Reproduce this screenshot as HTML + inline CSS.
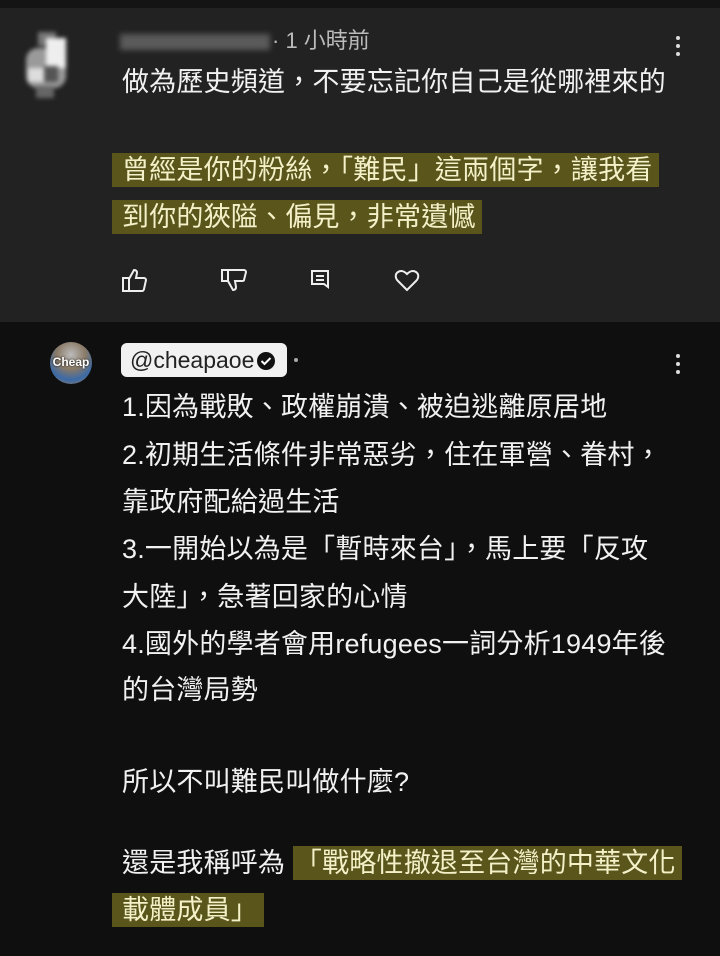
<!DOCTYPE html>
<html><head><meta charset="utf-8"><style>
*{margin:0;padding:0;box-sizing:border-box}
body{width:720px;height:956px;background:#0f0f0f;position:relative;overflow:hidden;font-family:"Liberation Sans","Noto Sans CJK TC",sans-serif;color:#f1f1f1}
.top{position:absolute;left:0;top:0;width:720px;height:322px;background:#222222}
.topbar{position:absolute;left:0;top:0;width:720px;height:8px;background:#141414}
.l{position:absolute;left:122px;height:36px;line-height:36px;font-size:27px;white-space:nowrap;letter-spacing:0.2px}
.hl{background:#59551b;color:#f4f0c8;padding:0 6px 0 10px;margin-left:-10px;display:inline-block;height:34px;line-height:34px}
.dots{position:absolute;width:4px;height:4px;background:#ddd;border-radius:2px}
</style></head><body>
<div class="top"></div><div class="topbar"></div>
<div style="position:absolute;left:22px;top:28px;width:52px;height:72px;filter:blur(2px)">
<div style="position:absolute;left:4px;top:20px;width:40px;height:40px;background:#9a9a9a;border-radius:12px"></div>
<div style="position:absolute;left:16px;top:4px;width:18px;height:14px;background:#777"></div>
<div style="position:absolute;left:24px;top:10px;width:20px;height:30px;background:#eee"></div>
<div style="position:absolute;left:6px;top:40px;width:18px;height:14px;background:#ddd"></div>
<div style="position:absolute;left:22px;top:38px;width:14px;height:16px;background:#555"></div>
<div style="position:absolute;left:14px;top:58px;width:18px;height:12px;background:#666"></div>
</div>
<div style="position:absolute;left:120px;top:34px;width:150px;height:16px;background:#5a5a5a;filter:blur(3px)"></div>
<div style="position:absolute;left:272px;top:27px;font-size:22px;color:#bbb;line-height:28px">· 1 小時前</div>
<div class="dots" style="left:676px;top:36px"></div><div class="dots" style="left:676px;top:44px"></div><div class="dots" style="left:676px;top:52px"></div>
<div class="l" style="top:64px">做為歷史頻道，不要忘記你自己是從哪裡來的</div>
<div class="l" style="top:152px"><span class="hl">曾經是你的粉絲，「難民」這兩個字，讓我看</span></div>
<div class="l" style="top:199px"><span class="hl">到你的狹隘、偏見，非常遺憾</span></div>
<svg style="position:absolute;left:120px;top:266px" width="310" height="28" fill="none" stroke="#eee" stroke-width="2">
<path d="M3 12h6v13H3z M9 13l5-9c2 0 3 1 3 3l-1 5h8c1 0 2 1 2 2l-2 9c0 1-1 2-2 2H9"/>
<path d="M104 4h22c1 0 2 1 2 2l-2 8c0 1-1 1-2 1h-7l1 6c0 2-1 3-3 3l-5-9 M104 4h6v11h-6z" transform="translate(-2,0)"/>
<path d="M192 5h16v16l-4-3h-12z M196 10h8 M196 14h8"/>
<path d="M287 24l-9-9c-3-3-3-7 0-9s6-1 9 2c3-3 6-4 9-2s3 6 0 9z"/>
</svg>
<div style="position:absolute;left:50px;top:342px;width:42px;height:42px;border-radius:21px;background:radial-gradient(circle at 50% 30%,#bbb 0,#8a7a66 40%,#3a6aa8 70%,#b08050 100%)"></div>
<div style="position:absolute;left:50px;top:355px;width:42px;text-align:center;font-size:12px;font-weight:bold;color:#fff;text-shadow:0 0 2px #000">Cheap</div>
<div style="position:absolute;left:121px;top:343px;width:166px;height:34px;background:#f1f1f1;border-radius:6px"></div>
<div style="position:absolute;left:130px;top:345px;font-size:23px;line-height:30px;color:#222">@cheapaoe</div>
<svg style="position:absolute;left:256px;top:351px" width="20" height="20"><circle cx="10" cy="10" r="9" fill="#111"/><path d="M5.5 10l3 3 6-6" stroke="#fff" stroke-width="2" fill="none"/></svg>
<div style="position:absolute;left:294px;top:358px;width:4px;height:4px;border-radius:2px;background:#aaa"></div>
<div class="dots" style="left:676px;top:354px"></div><div class="dots" style="left:676px;top:362px"></div><div class="dots" style="left:676px;top:370px"></div>
<div class="l" style="top:389px">1.因為戰敗、政權崩潰、被迫逃離原居地</div>
<div class="l" style="top:437px">2.初期生活條件非常惡劣，住在軍營、眷村，</div>
<div class="l" style="top:484px">靠政府配給過生活</div>
<div class="l" style="top:531px">3.一開始以為是「暫時來台」，馬上要「反攻</div>
<div class="l" style="top:579px">大陸」，急著回家的心情</div>
<div class="l" style="top:626px">4.國外的學者會用refugees一詞分析1949年後</div>
<div class="l" style="top:672px">的台灣局勢</div>
<div class="l" style="top:764px">所以不叫難民叫做什麼?</div>
<div class="l" style="top:845px">還是我稱呼為 <span class="hl" style="padding-left:2px;margin-left:0">「戰略性撤退至台灣的中華文化</span></div>
<div class="l" style="top:892px"><span class="hl">載體成員」</span></div>
</body></html>
